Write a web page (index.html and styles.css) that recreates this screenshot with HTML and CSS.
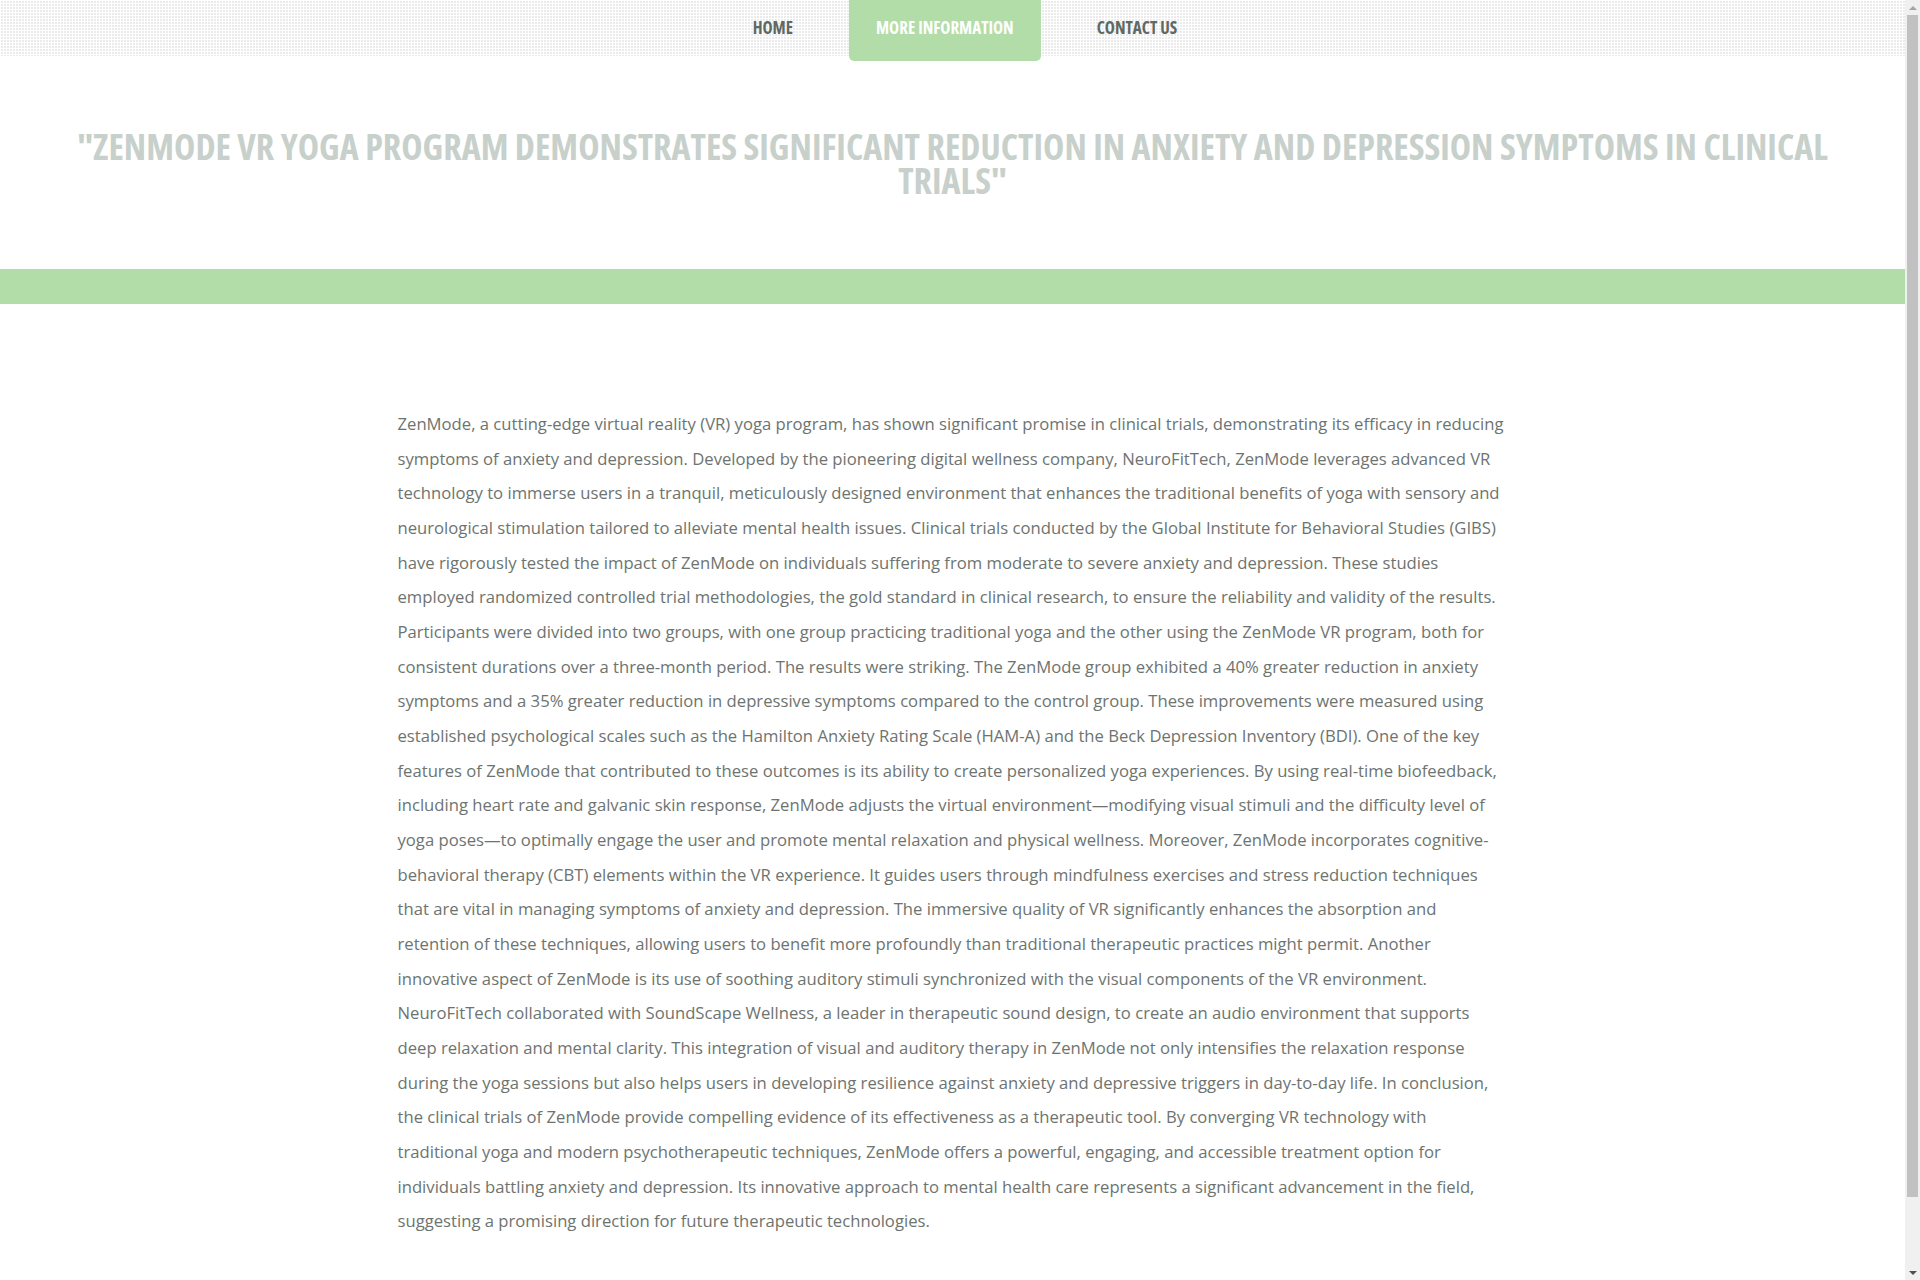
FILE: index.html
```html
<!DOCTYPE html>
<html lang="en">
<head>
<meta charset="utf-8">
<title>ZenMode VR Yoga</title>
<link rel="stylesheet" href="styles.css">
</head>
<body>
<div class="page">
  <nav class="topnav">
    <ul class="menu">
      <li class="menu-item"><a href="#">HOME</a></li>
      <li class="menu-item active"><a href="#">MORE INFORMATION</a></li>
      <li class="menu-item"><a href="#">CONTACT US</a></li>
    </ul>
  </nav>
  <header class="page-header">
    <h1 class="title">"ZenMode VR Yoga Program Demonstrates Significant Reduction in Anxiety and Depression Symptoms in Clinical Trials"</h1>
  </header>
  <div class="band"></div>
  <main class="container">
    <p class="article">ZenMode, a cutting-edge virtual reality (VR) yoga program, has shown significant promise in clinical trials, demonstrating its efficacy in reducing symptoms of anxiety and depression. Developed by the pioneering digital wellness company, NeuroFitTech, ZenMode leverages advanced VR technology to immerse users in a tranquil, meticulously designed environment that enhances the traditional benefits of yoga with sensory and neurological stimulation tailored to alleviate mental health issues. Clinical trials conducted by the Global Institute for Behavioral Studies (GIBS) have rigorously tested the impact of ZenMode on individuals suffering from moderate to severe anxiety and depression. These studies employed randomized controlled trial methodologies, the gold standard in clinical research, to ensure the reliability and validity of the results. Participants were divided into two groups, with one group practicing traditional yoga and the other using the ZenMode VR program, both for consistent durations over a three-month period. The results were striking. The ZenMode group exhibited a 40% greater reduction in anxiety symptoms and a 35% greater reduction in depressive symptoms compared to the control group. These improvements were measured using established psychological scales such as the Hamilton Anxiety Rating Scale (HAM-A) and the Beck Depression Inventory (BDI). One of the key features of ZenMode that contributed to these outcomes is its ability to create personalized yoga experiences. By using real-time biofeedback, including heart rate and galvanic skin response, ZenMode adjusts the virtual environment—modifying visual stimuli and the difficulty level of yoga poses—to optimally engage the user and promote mental relaxation and physical wellness. Moreover, ZenMode incorporates cognitive-behavioral therapy (CBT) elements within the VR experience. It guides users through mindfulness exercises and stress reduction techniques that are vital in managing symptoms of anxiety and depression. The immersive quality of VR significantly enhances the absorption and retention of these techniques, allowing users to benefit more profoundly than traditional therapeutic practices might permit. Another innovative aspect of ZenMode is its use of soothing auditory stimuli synchronized with the visual components of the VR environment. NeuroFitTech collaborated with SoundScape Wellness, a leader in therapeutic sound design, to create an audio environment that supports deep relaxation and mental clarity. This integration of visual and auditory therapy in ZenMode not only intensifies the relaxation response during the yoga sessions but also helps users in developing resilience against anxiety and depressive triggers in day-to-day life. In conclusion, the clinical trials of ZenMode provide compelling evidence of its effectiveness as a therapeutic tool. By converging VR technology with traditional yoga and modern psychotherapeutic techniques, ZenMode offers a powerful, engaging, and accessible treatment option for individuals battling anxiety and depression. Its innovative approach to mental health care represents a significant advancement in the field, suggesting a promising direction for future therapeutic technologies.</p>
  </main>
</div>
<div class="scrollbar" aria-hidden="true">
  <span class="sb-arrow sb-up"></span>
  <span class="sb-thumb"></span>
  <span class="sb-arrow sb-down"></span>
</div>
</body>
</html>
```

FILE: styles.css
```css
html, body {
  margin: 0;
  padding: 0;
}
body {
  background: #fff;
  font-family: "Open Sans", "Liberation Sans", sans-serif;
  color: #6d7470;
}
.page {
  margin-right: 15px;
}
.topnav {
  height: 56px;
  background-color: #ebebeb;
  background-image:
    linear-gradient(to right, #fff 1px, transparent 1px),
    linear-gradient(to bottom, #fff 1px, transparent 1px);
  background-size: 3px 3px;
}
.menu {
  list-style: none;
  margin: 0;
  padding: 0 0 0 25px;
  display: flex;
  justify-content: center;
  gap: 29px;
  height: 56px;
}
.menu-item a {
  display: block;
  padding: 0 27px;
  height: 56px;
  line-height: 56px;
  font-family: "Open Sans", "Liberation Sans", sans-serif;
  font-stretch: 75%;
  font-weight: 700;
  font-size: 17px;
  color: #5f6863;
  text-decoration: none;
}
.menu-item.active a {
  height: 61px;
  background: #b2dda9;
  color: #fff;
  border-radius: 0 0 5px 5px;
}
.page-header {
  padding: 74px 60px 71px;
}
.title {
  margin: 0;
  text-align: center;
  text-transform: uppercase;
  font-family: "Open Sans", "Liberation Sans", sans-serif;
  font-stretch: 75%;
  font-weight: 700;
  font-size: 36px;
  line-height: 34px;
  color: #c8d0cb;
}
.band {
  height: 35px;
  background: #b2dda9;
}
.container {
  width: 1110px;
  margin: 0 auto;
  padding: 103px 0 114px;
}
.article {
  margin: 0;
  font-size: 16.66px;
  line-height: 34.67px;
}

/* simulated browser scrollbar, overlaying the right edge */
.scrollbar {
  position: fixed;
  top: 0;
  right: 0;
  width: 15px;
  height: 100vh;
  background: #f0f0f0;
  display: flex;
  flex-direction: column;
  align-items: center;
}
.sb-arrow {
  flex: 0 0 15px;
  width: 15px;
  display: flex;
  align-items: center;
  justify-content: center;
}
.sb-arrow::before {
  content: "";
  width: 0;
  height: 0;
  border-left: 4px solid transparent;
  border-right: 4px solid transparent;
}
.sb-up::before {
  border-bottom: 4px solid #a3a3a3;
}
.sb-down::before {
  border-top: 4px solid #505050;
}
.sb-thumb {
  width: 11px;
  height: 1182px;
  background: #c1c1c1;
}
.sb-down {
  margin-top: auto;
}
```
